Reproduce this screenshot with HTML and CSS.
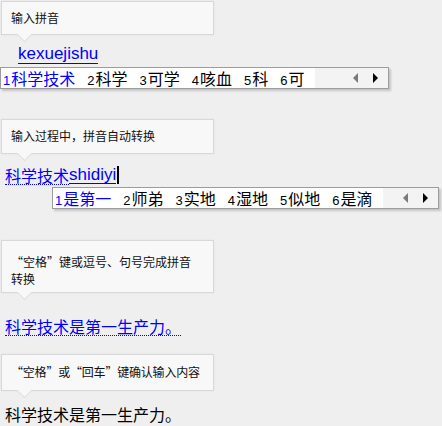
FILE: index.html
```html
<!DOCTYPE html>
<html lang="zh-CN">
<head>
<meta charset="utf-8">
<link rel="stylesheet" href="styles.css">
</head>
<body>
<div class="page">
  <div class="tip t1">输入拼音</div>
  <div class="pinyin"><span class="py">kexuejishu</span></div>
  <div class="bar bar1">
    <div class="cands">
      <span class="c sel"><i>1</i>科学技术</span>
      <span class="c"><i>2</i>科学</span>
      <span class="c"><i>3</i>可学</span>
      <span class="c"><i>4</i>咳血</span>
      <span class="c"><i>5</i>科</span>
      <span class="c"><i>6</i>可</span>
    </div>
    <div class="arrows">
      <svg class="ar" width="5" height="10" viewBox="0 0 5 10"><polygon points="5,0 5,10 0,5" fill="#7a7a7a"/></svg>
      <svg class="ar" width="5" height="10" viewBox="0 0 5 10"><polygon points="0,0 0,10 5,5" fill="#000"/></svg>
    </div>
  </div>

  <div class="tip t2">输入过程中，拼音自动转换</div>
  <div class="line line2">
    <span class="conv">科学技术</span><span class="py2">shidiyi</span><span class="caret"></span>
  </div>
  <div class="bar bar2">
    <div class="cands">
      <span class="c sel"><i>1</i>是第一</span>
      <span class="c"><i>2</i>师弟</span>
      <span class="c"><i>3</i>实地</span>
      <span class="c"><i>4</i>湿地</span>
      <span class="c"><i>5</i>似地</span>
      <span class="c"><i>6</i>是滴</span>
    </div>
    <div class="arrows">
      <svg class="ar" width="5" height="10" viewBox="0 0 5 10"><polygon points="5,0 5,10 0,5" fill="#7a7a7a"/></svg>
      <svg class="ar" width="5" height="10" viewBox="0 0 5 10"><polygon points="0,0 0,10 5,5" fill="#000"/></svg>
    </div>
  </div>

  <div class="tip t3">“空格”键或逗号、句号完成拼音转换</div>
  <div class="line line3"><span class="conv">科学技术是第一生产力。</span></div>

  <div class="tip t4">“空格”或“回车”键确认输入内容</div>
  <div class="line line4">科学技术是第一生产力。</div>
</div>
</body>
</html>
```

FILE: styles.css
```css
html, body {
  margin: 0;
  padding: 0;
  background: #efefef;
}
.page {
  width: 442px;
  height: 426px;
  overflow: hidden;
  font-family: "Noto Sans CJK SC", "Liberation Sans", sans-serif;
  color: #000;
}
.tip {
  position: relative;
  box-sizing: border-box;
  width: 213px;
  margin-left: 1px;
  background: #f8f8f8;
  border: 1px solid #d8d8d8;
  box-shadow: 0 0 2px rgba(0,0,0,0.06);
  font-size: 12px;
  line-height: 14px;
  padding: 9px 12px 9px 9px;
  color: #111;
}
.tip::after {
  content: "";
  position: absolute;
  left: 17px;
  bottom: -6px;
  width: 10px;
  height: 10px;
  background: #f8f8f8;
  border-right: 1px solid #dedede;
  border-bottom: 1px solid #dedede;
  transform: rotate(45deg);
}
.t1 { margin-top: 1px; height: 34px; }
.t2 { margin-top: 30px; padding-top: 9px; padding-bottom: 10px; }
.t3 { margin-top: 31px; line-height: 17px; padding-top: 12px; padding-bottom: 5px; }
.t4 { margin-top: 18px; padding-top: 10px; padding-bottom: 11px; padding-right: 2px; white-space: nowrap; letter-spacing: -0.2px; }

.pinyin {
  margin-top: 9px;
  height: 20px;
  padding-left: 18px;
  display: flex;
  align-items: flex-end;
}
.py {
  font-family: "Liberation Sans", sans-serif;
  font-size: 17px;
  line-height: 18px;
  color: #0000ff;
  border-bottom: 1px solid #0000ff;
}

.bar {
  display: flex;
  box-sizing: border-box;
  height: 22px;
  border: 1px solid #9c9c9c;
  background: #fff;
  box-shadow: 2px 2px 2px rgba(0,0,0,0.18);
}
.bar1 { margin-top: 3px; width: 389px; }
.bar2 { margin-top: 2px; margin-left: 52px; width: 387px; }
.cands {
  display: flex;
  gap: 12px;
  padding: 0 10px 0 2px;
  font-size: 16px;
  line-height: 20px;
  white-space: nowrap;
}
.c i {
  font-style: normal;
  font-family: "Liberation Sans", sans-serif;
  font-size: 13px;
  margin-right: 1px;
}
.c.sel { color: #0000ff; }
.arrows {
  flex: 1;
  background: #f3f3f3;
  display: flex;
  justify-content: flex-end;
  align-items: center;
  gap: 15px;
  padding-right: 10px;
}
.ar { display: block; }

.line {
  height: 20px;
  display: flex;
  align-items: flex-end;
  font-size: 16px;
  padding-left: 5px;
}
.line2 { margin-top: 11px; }
.line3 { margin-top: 23px; }
.line4 { margin-top: 14px; height: 19px; line-height: 19px; align-items: center; }
.conv {
  color: #0000ff;
  line-height: 18px;
  border-bottom: 1px dotted #0000ff;
}
.py2 {
  font-family: "Liberation Sans", sans-serif;
  font-size: 17px;
  line-height: 17px;
  color: #0000ff;
  border-bottom: 1px solid #0000ff;
  margin-bottom: 1px;
}
.caret {
  width: 2px;
  height: 18px;
  background: #000;
  margin-left: 1px;
  margin-bottom: 1px;
}
```
